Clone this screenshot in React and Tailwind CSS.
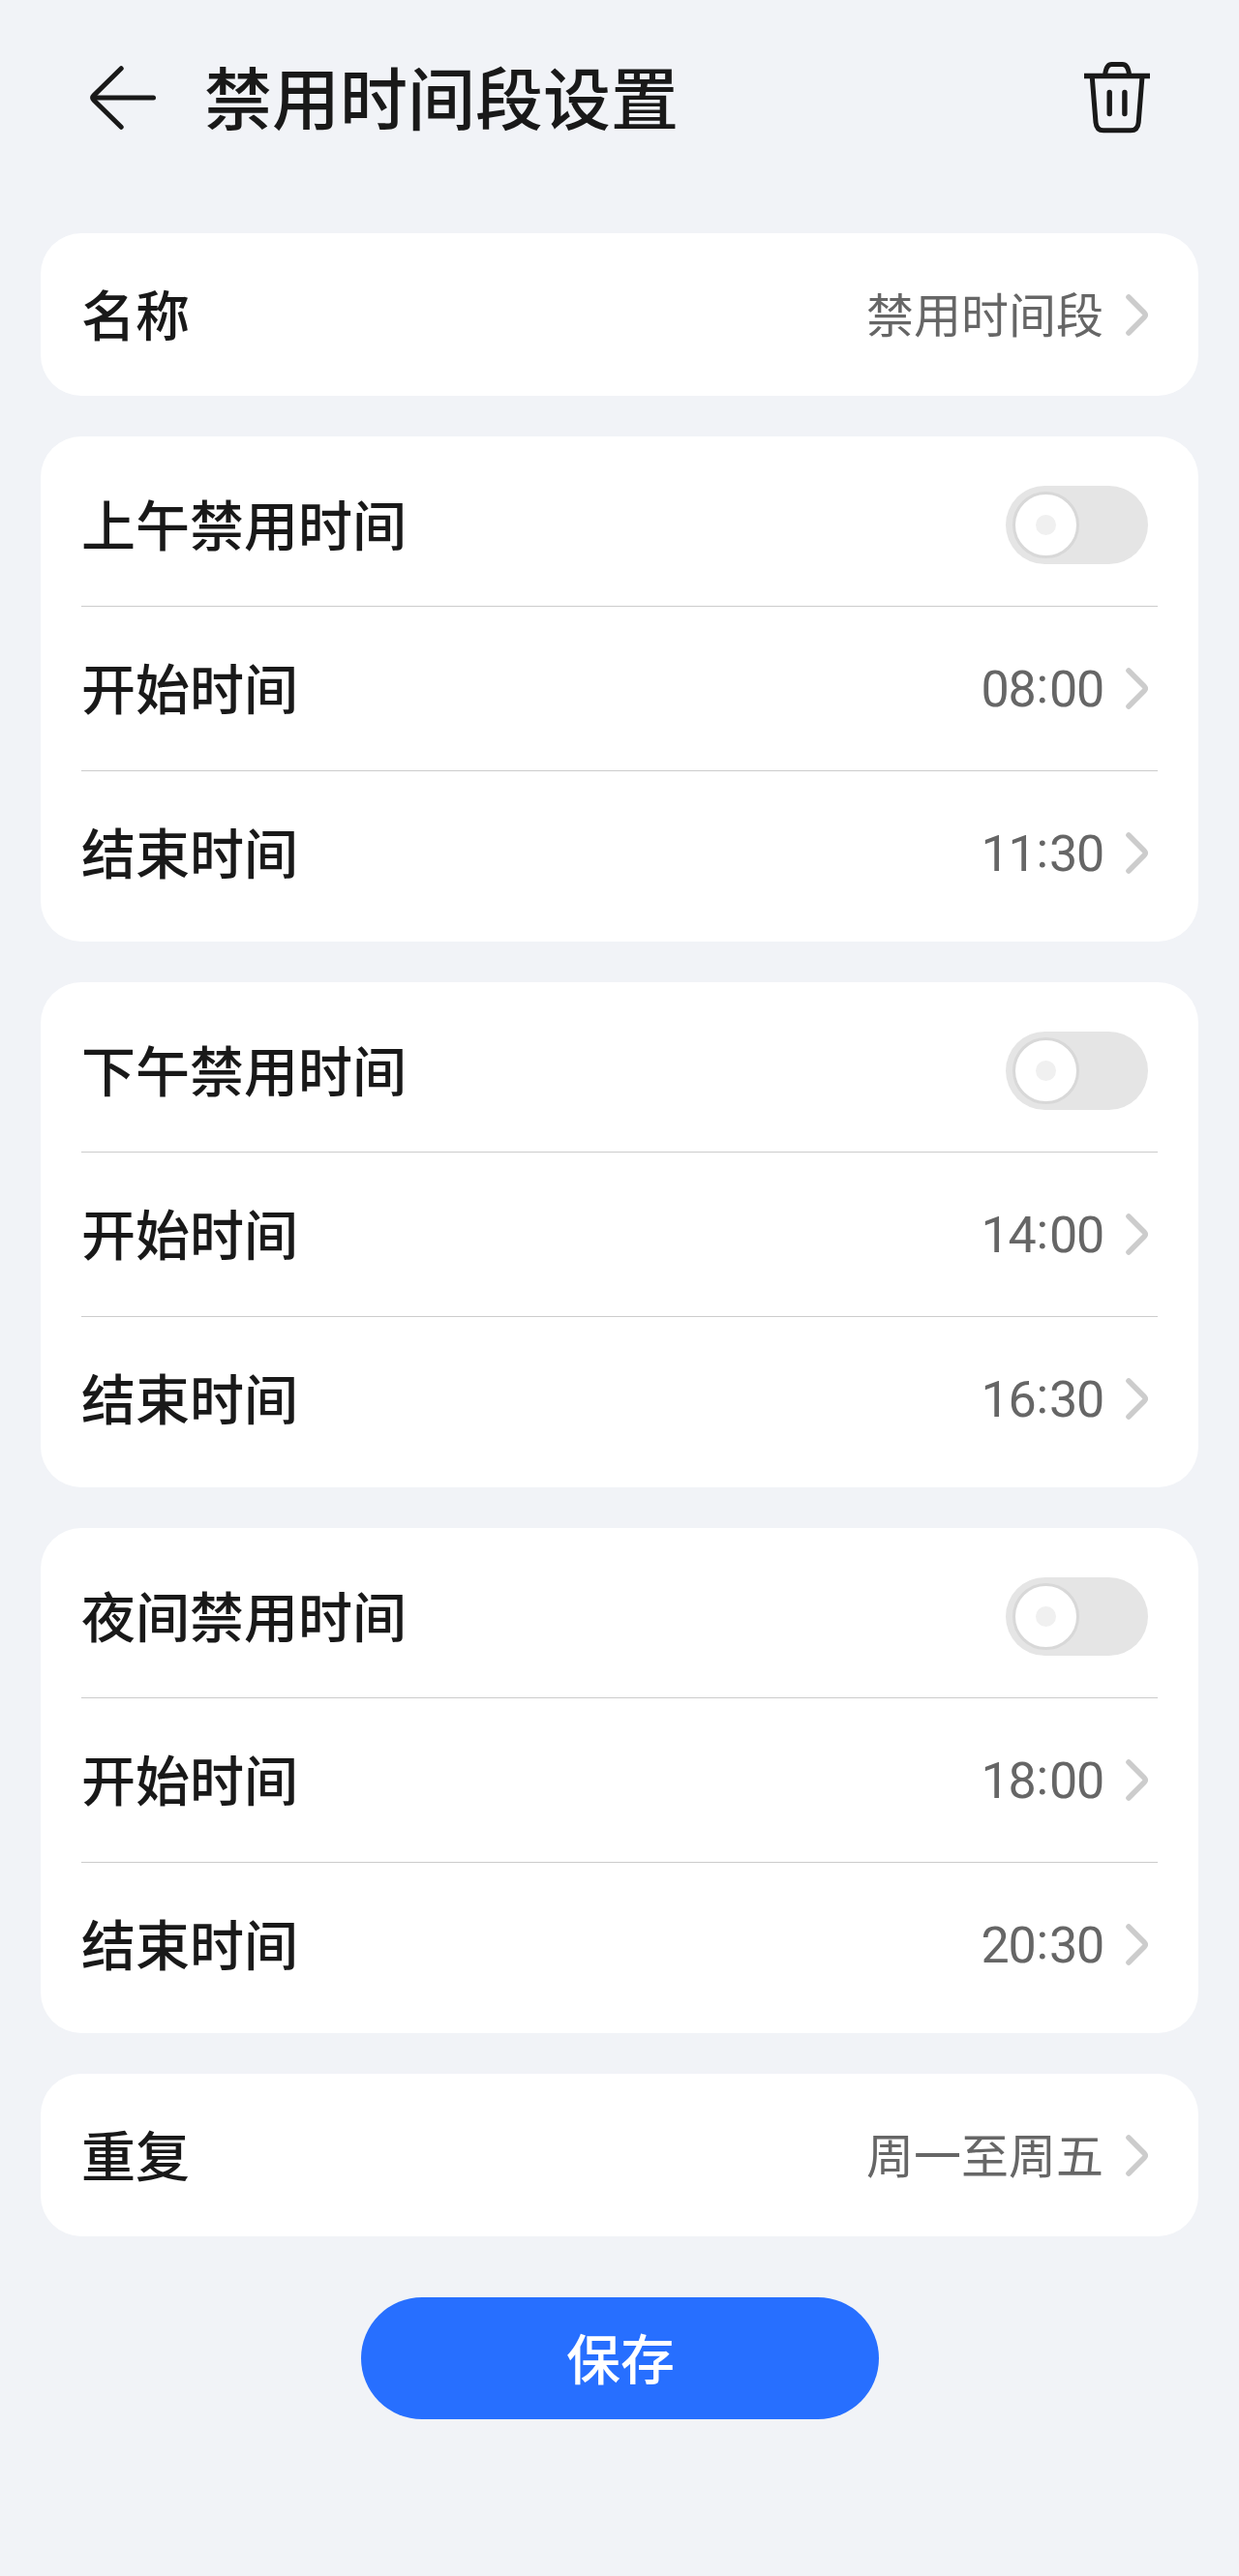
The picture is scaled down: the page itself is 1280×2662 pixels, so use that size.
import { useState } from "react";

const periods = [
  { id: "morning", title: "上午禁用时间", start: "08:00", end: "11:30" },
  { id: "afternoon", title: "下午禁用时间", start: "14:00", end: "16:30" },
  { id: "night", title: "夜间禁用时间", start: "18:00", end: "20:30" },
];

const BackIcon = () => (
  <svg width="68" height="66" viewBox="0 0 68 66" fill="none" stroke="currentColor" strokeWidth="5" strokeLinecap="round">
    <path d="M32.2 2.7 3.9 30.6q-2.4 2.4 0 4.8L32.2 63.3" strokeLinejoin="round" />
    <path d="M4 33h61.5" />
  </svg>
);

const TrashIcon = () => (
  <svg width="68" height="74" viewBox="0 0 68 74" fill="none" stroke="currentColor" strokeWidth="5">
    <path d="M0 14.5h68" strokeWidth="5.4" />
    <path d="M21.6 13.5C22.4 6.5 24 2.6 28.5 2.6H39.5C44 2.6 45.8 6.5 46.6 13.5" />
    <path d="M8.2 15 12 62.5C12.5 67.5 15 70.8 20 70.8H48.2C53.2 70.8 55.7 67.5 56.2 62.5L60 15" />
    <path d="M26.2 31.5v22M41.9 31.5v22" strokeWidth="5.4" strokeLinecap="round" />
  </svg>
);

const Chevron = () => (
  <svg width="23" height="43" viewBox="0 0 23 43" fill="none" stroke="#cccccc" strokeWidth="5.6" strokeLinecap="round" strokeLinejoin="round">
    <path d="M3 3 19.2 19.3q2 2.2 0 4.4L3 40" />
  </svg>
);

const Time = ({ value }) => {
  const [hours, minutes] = value.split(":");
  return (
    <span className="flex pt-[2px] font-['Roboto',sans-serif] text-[52px] leading-none tracking-[-1.2px]">
      {hours}
      <span className="-mt-[4px] ml-[1px] mr-[2px]">:</span>
      {minutes}
    </span>
  );
};

const Toggle = ({ checked, onChange }) => (
  <button
    type="button"
    role="switch"
    aria-checked={checked}
    onClick={() => onChange(!checked)}
    className={`flex h-[81px] w-[147px] items-center rounded-full px-[7px] ${
      checked ? "justify-end bg-[#276fff]" : "bg-[#e5e5e5]"
    }`}
  >
    <span className="flex size-[69px] items-center justify-center rounded-full border-[3px] border-[#d8d8d8] bg-white">
      <span className="size-[21px] rounded-full bg-[#f0f0f0]" />
    </span>
  </button>
);

const Row = ({ label, children, className = "h-[169px]" }) => (
  <div className={`flex items-center justify-between pr-[10px] ${className}`}>
    <span className="pb-[5px] text-[56px] font-medium leading-none text-[#191919]">{label}</span>
    {children}
  </div>
);

const Value = ({ children }) => (
  <div className="flex items-center gap-[23px] leading-none text-[#666666]">
    {children}
    <Chevron />
  </div>
);

const Card = ({ children }) => <section className="rounded-[42px] bg-white px-[42px]">{children}</section>;

const PeriodCard = ({ period }) => {
  const [enabled, setEnabled] = useState(false);

  return (
    <Card>
      <Row label={period.title} className="h-[175px] pt-[7px]">
        <Toggle checked={enabled} onChange={setEnabled} />
      </Row>
      <hr className="border-[#cccccc]" />
      <Row label="开始时间">
        <Value>
          <Time value={period.start} />
        </Value>
      </Row>
      <hr className="border-[#cccccc]" />
      <Row label="结束时间" className="h-[176px] pb-[7px]">
        <Value>
          <Time value={period.end} />
        </Value>
      </Row>
    </Card>
  );
};

const App = () => {
  return (
    <div
      lang="zh-CN"
      className="min-h-[2662px] bg-[#f1f3f7] font-['Noto_Sans_CJK_SC',sans-serif] text-[#191919]"
    >
      <header className="flex h-[241px] items-start pl-[93px] pr-[92px] pt-[64px]">
        <button type="button" aria-label="返回" className="mt-[4px]">
          <BackIcon />
        </button>
        <h1 className="ml-[50px] text-[70px] font-medium leading-none">禁用时间段设置</h1>
        <button type="button" aria-label="删除" className="ml-auto">
          <TrashIcon />
        </button>
      </header>

      <main className="flex flex-col gap-[42px] px-[42px]">
        <Card>
          <Row label="名称" className="h-[168px]">
            <Value>
              <span className="pb-[6px] text-[49px]">禁用时间段</span>
            </Value>
          </Row>
        </Card>
        {periods.map((period) => (
          <PeriodCard key={period.id} period={period} />
        ))}
        <Card>
          <Row label="重复" className="h-[168px]">
            <Value>
              <span className="pb-[6px] text-[49px]">周一至周五</span>
            </Value>
          </Row>
        </Card>
      </main>

      <button
        type="button"
        className="mx-auto mt-[63px] flex h-[126px] w-[535px] items-center justify-center rounded-full bg-[#276fff] pb-[5px] pl-[2px] text-[56px] font-medium leading-none text-white"
      >
        保存
      </button>
    </div>
  );
};

export default App;
